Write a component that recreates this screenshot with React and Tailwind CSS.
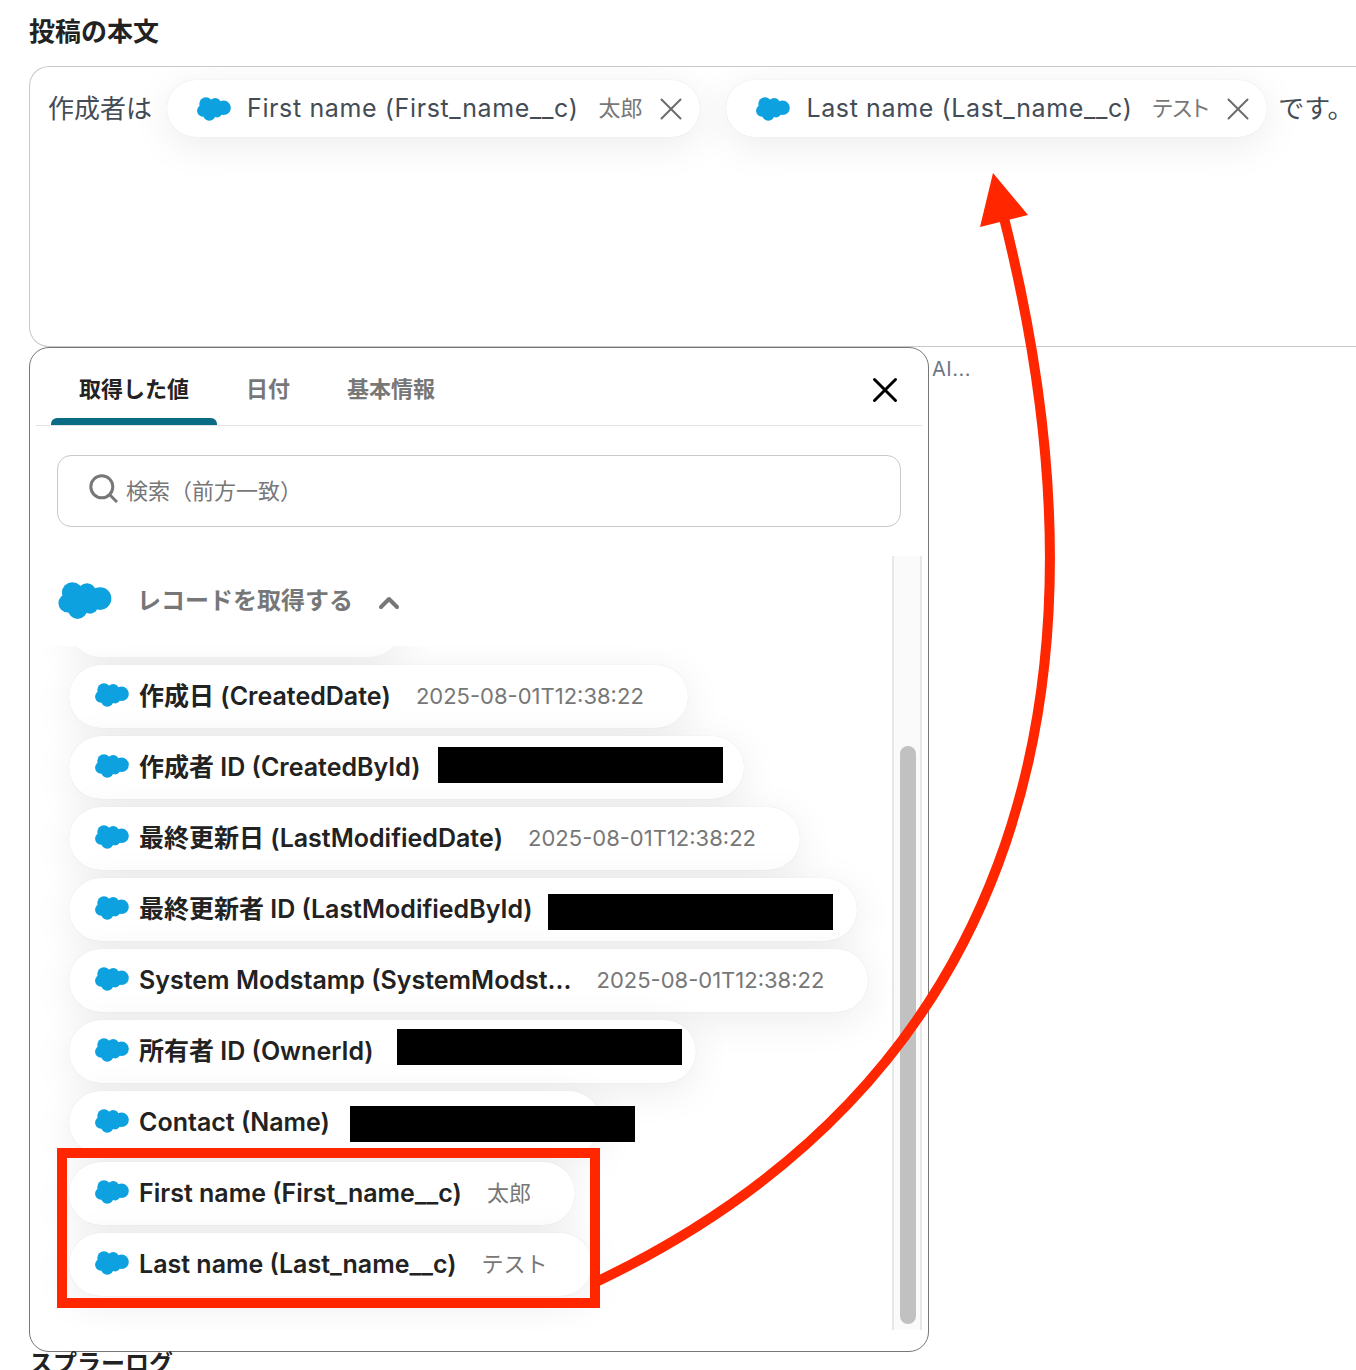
import { ChevronUp, X } from 'lucide-react'

const items = [
  { label: '作成日 (CreatedDate)', value: '2025-08-01T12:38:22' },
  { label: '作成者 ID (CreatedById)', width: 'w-[675px]', mask: 'left-[369px] top-[11px]' },
  { label: '最終更新日 (LastModifiedDate)', value: '2025-08-01T12:38:22' },
  { label: '最終更新者 ID (LastModifiedById)', width: 'w-[788px]', mask: 'left-[479px] top-[16px]' },
  { label: 'System Modstamp (SystemModst...', value: '2025-08-01T12:38:22' },
  { label: '所有者 ID (OwnerId)', width: 'w-[627px]', mask: 'left-[328px] top-[9px]' },
  { label: 'Contact (Name)', width: 'w-[532px]', mask: 'left-[281px] top-[15px]' },
  { label: 'First name (First_name__c)', value: '太郎' },
  { label: 'Last name (Last_name__c)', value: 'テスト' },
]

const tabs = ['取得した値', '日付', '基本情報']

function Cloud({ className }) {
  return (
    <svg viewBox="0 0 54 37.5" fill="#0da1e0" aria-hidden="true" className={`shrink-0 ${className}`}>
      <circle cx="14.2" cy="10.8" r="10.6" />
      <circle cx="29" cy="10.6" r="9.3" />
      <circle cx="42.2" cy="16.8" r="11.5" />
      <circle cx="9.6" cy="21.5" r="9.5" />
      <circle cx="19.5" cy="27.6" r="9.8" />
      <circle cx="32" cy="23.8" r="8.3" />
      <ellipse cx="25" cy="18" rx="14" ry="12" />
    </svg>
  )
}

function SearchIcon() {
  return (
    <svg
      viewBox="0 0 29 29"
      fill="none"
      stroke="#777"
      strokeWidth="3"
      aria-hidden="true"
      className="mb-[6px] size-[29px] shrink-0"
    >
      <circle cx="12.8" cy="12.8" r="11" />
      <path d="M20.5 20.5L28 28" />
    </svg>
  )
}

function EditorChip({ label, value }) {
  return (
    <span className="ml-[15px] mr-[11px] flex h-[57px] items-center rounded-full bg-white pl-[30px] pr-[10px] shadow-[0_0_1px_rgba(0,0,0,0.12),0_8px_40px_rgba(0,0,0,0.08)]">
      <Cloud className="h-6 w-[34px]" />
      <span className="ml-4 text-[25px] tracking-wide whitespace-nowrap">{label}</span>
      <span className="ml-5 text-[22px] whitespace-nowrap text-[#777] [font-feature-settings:'palt']">{value}</span>
      <button aria-label={`${label} を削除`} className="ml-[10px] text-[#6b6b6b]">
        <X size={38} strokeWidth={2} absoluteStrokeWidth />
      </button>
    </span>
  )
}

function ValueItem({ label, value, width = '', mask }) {
  return (
    <li>
      <button
        className={`relative flex h-[63px] items-center rounded-full bg-white pl-[26px] pr-[44px] whitespace-nowrap shadow-[0_0_1px_rgba(0,0,0,0.12),0_8px_40px_rgba(0,0,0,0.08)] ${width}`}
      >
        <Cloud className="mb-1 h-6 w-[34px]" />
        <span className="ml-[10px] text-[25px] font-semibold text-[#222]">{label}</span>
        {value && <span className="ml-[25px] text-[22px] text-[#777]">{value}</span>}
        {mask && <span className={`absolute h-9 w-[285px] bg-black ${mask}`} />}
      </button>
    </li>
  )
}

function ValuePicker() {
  return (
    <section
      aria-label="値の選択"
      className="h-[1005px] w-[900px] shrink-0 rounded-[20px] border border-[#777] bg-white px-[6px]"
    >
      <div className="flex h-[78px] items-end border-b border-[#e3e3e3] pl-[15px]">
        <div role="tablist" className="flex flex-1 items-end gap-px">
          {tabs.map((tab, i) => (
            <button
              key={tab}
              role="tab"
              aria-selected={i === 0}
              className={`flex flex-col text-[22px] font-semibold ${i === 0 ? 'text-[#222]' : 'text-[#777]'}`}
            >
              <span className="px-7 pb-[12px]">{tab}</span>
              <span className={`h-[7px] w-full rounded-t-md ${i === 0 ? 'bg-[#0b6a84]' : ''}`} />
            </button>
          ))}
        </div>
        <button aria-label="閉じる" className="mr-4 mb-[14px] text-black">
          <X size={42} strokeWidth={3} absoluteStrokeWidth />
        </button>
      </div>

      <label className="mx-[21px] mt-[29px] flex h-[72px] items-center rounded-[14px] border border-[#c9c9c9] pl-[31px]">
        <SearchIcon />
        <input
          type="text"
          aria-label="検索"
          placeholder="検索（前方一致）"
          className="ml-2 flex-1 text-[22px] outline-none placeholder:text-[#777]"
        />
      </label>

      <div className="mt-[29px] flex h-[774px]">
        <div className="flex min-w-0 flex-1 flex-col">
          <button className="flex h-[90px] items-center pl-[22px] text-[#777]">
            <Cloud className="mb-[2px] h-[37px] w-[54px]" />
            <span className="ml-[25px] text-2xl font-semibold">レコードを取得する</span>
            <ChevronUp size={32} strokeWidth={4} absoluteStrokeWidth className="mt-[3px] ml-5" />
          </button>
          <ul className="flex flex-1 flex-col justify-end gap-2 overflow-hidden pb-[34px] pl-[33px]">
            <li className="h-[63px] w-[332px] shrink-0 rounded-full bg-white shadow-[0_8px_40px_rgba(0,0,0,0.08)]" />
            {items.map((item) => (
              <ValueItem key={item.label} {...item} />
            ))}
          </ul>
        </div>
        <div className="flex w-[30px] shrink-0 items-end justify-end border-x-2 border-[#e8e8e8] bg-[#fafafa] pr-1 pb-[6px]">
          <div className="h-[578px] w-4 rounded-full bg-[#c1c1c1]" />
        </div>
      </div>
    </section>
  )
}

// Red frame and arrow drawn over the page
function Annotation() {
  return (
    <svg
      width="1100"
      height="1340"
      viewBox="0 0 1100 1340"
      fill="none"
      stroke="#ff2600"
      strokeWidth="10"
      aria-hidden="true"
      className="pointer-events-none absolute top-0 left-0"
    >
      <rect x="62" y="1153" width="533" height="150" />
      <path d="M596 1282C999 1090 1129 715 1004 218" />
      <path d="M993 173L1028 215L980 227Z" fill="#ff2600" stroke="none" />
    </svg>
  )
}

export default function App() {
  return (
    <main className="relative h-screen overflow-hidden bg-white pl-[29px] font-['Inter','Noto_Sans_CJK_JP',sans-serif] text-[26px] text-[#222]">
      <h2 className="pt-[14px] pb-4 leading-9 font-semibold">投稿の本文</h2>

      <div
        role="textbox"
        aria-label="投稿の本文"
        className="flex h-[281px] items-start overflow-hidden rounded-l-[20px] border-y border-l border-[#c9c9c9] pt-[13px] pl-[18px] text-[#444c55]"
      >
        <div className="flex h-[57px] items-center whitespace-nowrap">
          <span>作成者は</span>
          <EditorChip label="First name (First_name__c)" value="太郎" />
          <EditorChip label="Last name (Last_name__c)" value="テスト" />
          <span>です。</span>
        </div>
      </div>

      <div className="flex">
        <ValuePicker />
        <p className="pt-[6px] pl-[3px] text-[20px] leading-8 tracking-wide text-[#6b7785]">AI...</p>
      </div>

      <h2 className="text-2xl leading-6 font-semibold whitespace-nowrap">スプラーログ</h2>

      <Annotation />
    </main>
  )
}
